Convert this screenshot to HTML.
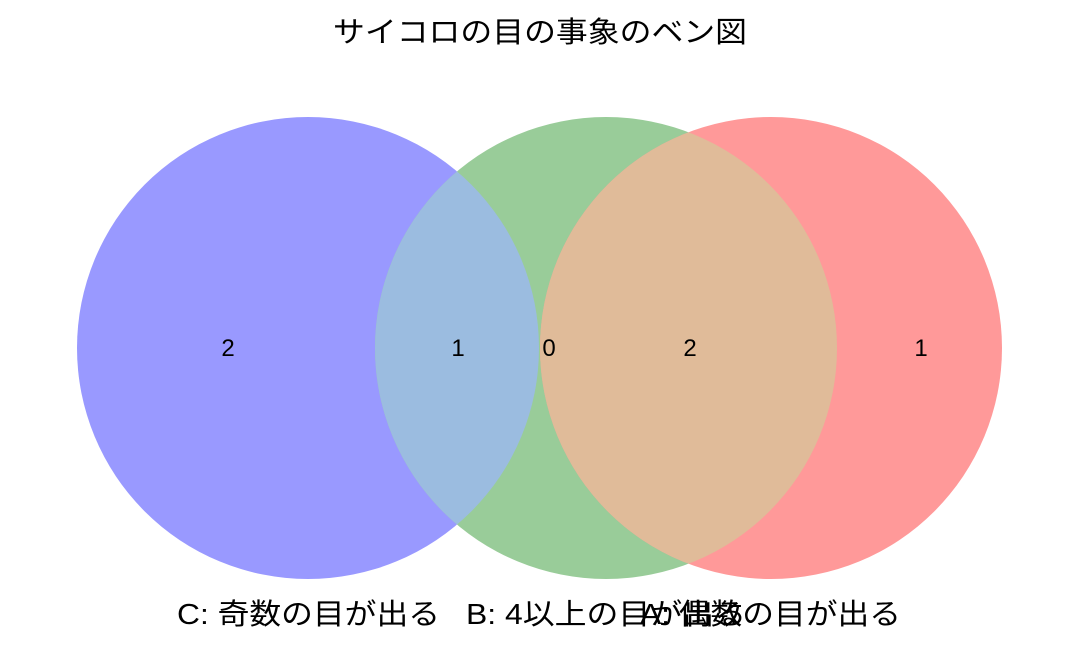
<!DOCTYPE html>
<html><head><meta charset="utf-8"><style>
html,body{margin:0;padding:0;background:#fff;}
svg{display:block}
text{font-family:"Liberation Sans","Noto Sans CJK JP",sans-serif;fill:#000}
</style></head><body>
<svg width="1080" height="657" viewBox="0 0 1080 657" xmlns="http://www.w3.org/2000/svg">
<defs>
<clipPath id="cg"><circle cx="606" cy="348" r="231"/></clipPath>
</defs>
<rect width="1080" height="657" fill="#fff"/>
<circle cx="308" cy="348" r="231" fill="#9999ff"/>
<circle cx="606" cy="348" r="231" fill="#99cc99"/>
<circle cx="771" cy="348" r="231" fill="#ff9999"/>
<circle cx="308" cy="348" r="231" fill="#9bbce0" clip-path="url(#cg)"/>
<circle cx="771" cy="348" r="231" fill="#e0bb99" clip-path="url(#cg)"/>
<text x="333" y="42" font-size="29" textLength="414" lengthAdjust="spacingAndGlyphs">サイコロの目の事象のベン図</text>
<g font-size="24" text-anchor="middle">
<text x="228" y="356">2</text>
<text x="458" y="356">1</text>
<text x="549" y="356">0</text>
<text x="690" y="356">2</text>
<text x="921" y="356">1</text>
</g>
<g font-size="29">
<text x="177" y="624" textLength="263" lengthAdjust="spacingAndGlyphs">C: 奇数の目が出る</text>
<text x="466" y="624" textLength="280" lengthAdjust="spacingAndGlyphs">B: 4以上の目が出る</text>
<text x="640" y="624" textLength="261" lengthAdjust="spacingAndGlyphs">A: 偶数の目が出る</text>
</g>
</svg>
</body></html>
